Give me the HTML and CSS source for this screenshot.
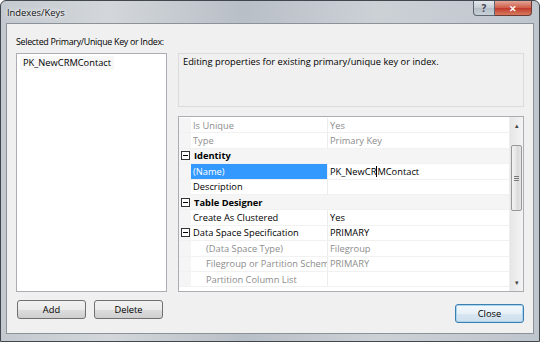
FILE: index.html
```html
<!DOCTYPE html>
<html lang="en">
<head>
    <meta charset="UTF-8">
    <title>Indexes/Keys</title>
    <link rel="stylesheet" href="styles.css">
</head>
<body>
    <div class="window">
        <!-- Title bar -->
        <div class="titlebar">
            <span class="title">Indexes/Keys</span>
            <div class="controls">
                <div class="ctl help">?</div>
                <div class="ctl close-x">&#x2715;</div>
            </div>
        </div>

        <!-- Client area -->
        <div class="client">
            <div class="label">Selected Primary/Unique Key or Index:</div>
            <div class="main">
                <div class="keylist">
                    <div class="item">PK_NewCRMContact</div>
                </div>
                <div class="right">
                    <div class="desc">Editing properties for existing primary/unique key or index.</div>
                    <div class="grid">
                        <div class="rows">
                            <div class="row"><div class="gut"></div><div class="name dim">Is Unique</div><div class="val dim">Yes</div></div>
                            <div class="row"><div class="gut"></div><div class="name dim">Type</div><div class="val dim">Primary Key</div></div>
                            <div class="row cat"><div class="gut"><svg class="exp" width="9" height="9" viewBox="0 0 9 9"><rect x="0.5" y="0.5" width="8" height="8" fill="#fff" stroke="#333"/><path d="M2 4.5h5" stroke="#000"/></svg></div><div class="name">Identity</div><div class="val"></div></div>
                            <div class="row"><div class="gut"></div><div class="name sel">(Name)</div><div class="val">PK_NewCR<span class="caret"></span>MContact</div></div>
                            <div class="row"><div class="gut"></div><div class="name">Description</div><div class="val"></div></div>
                            <div class="row cat"><div class="gut"><svg class="exp" width="9" height="9" viewBox="0 0 9 9"><rect x="0.5" y="0.5" width="8" height="8" fill="#fff" stroke="#333"/><path d="M2 4.5h5" stroke="#000"/></svg></div><div class="name">Table Designer</div><div class="val"></div></div>
                            <div class="row"><div class="gut"></div><div class="name">Create As Clustered</div><div class="val">Yes</div></div>
                            <div class="row"><div class="gut"><svg class="exp" width="9" height="9" viewBox="0 0 9 9"><rect x="0.5" y="0.5" width="8" height="8" fill="#fff" stroke="#333"/><path d="M2 4.5h5" stroke="#000"/></svg></div><div class="name">Data Space Specification</div><div class="val">PRIMARY</div></div>
                            <div class="row"><div class="gut"></div><div class="name dim sub">(Data Space Type)</div><div class="val dim">Filegroup</div></div>
                            <div class="row"><div class="gut"></div><div class="name dim sub">Filegroup or Partition Schem</div><div class="val dim">PRIMARY</div></div>
                            <div class="row"><div class="gut"></div><div class="name dim sub">Partition Column List</div><div class="val"></div></div>
                        </div>
                        <div class="scrollbar">
                            <div class="sb-btn">&#x25B4;</div>
                            <div class="sb-track"><div class="thumb"><span></span><span></span><span></span></div></div>
                            <div class="sb-btn">&#x25BE;</div>
                        </div>
                    </div>
                </div>
            </div>
            <div class="buttons">
                <div class="left-btns">
                    <button class="btn">Add</button>
                    <button class="btn">Delete</button>
                </div>
                <button class="btn default">Close</button>
            </div>
        </div>
    </div>
</body>
</html>
```

FILE: styles.css
```css
body { margin: 0; font-family: "Open Sans", "Liberation Sans", sans-serif; font-size: 9.3px; color: #000; }
.window { width: 540px; height: 342px; box-sizing: border-box; border: 1px solid #41474f; border-radius: 6px 6px 0 0; padding: 0 5px 7px 5px; display: flex; flex-direction: column; background: linear-gradient(to right, #c3c9cf 0%, #d3d7db 20%, #b9bfc6 45%, #ccd1d6 70%, #bfc5cc 100%); }

/* Title bar */
.titlebar { height: 22px; display: flex; justify-content: space-between; align-items: flex-start; }
.title { padding: 5px 0 0 1px; font-size: 9.4px; color: #111; text-shadow: 0 0 6px #fff, 0 0 3px #fff; }
.controls { display: flex; margin-right: 2px; }
.ctl { height: 15px; box-sizing: border-box; display: flex; align-items: center; justify-content: center; border: 1px solid #5d6670; border-top: none; }
.help { width: 22px; border-radius: 0 0 0 4px; background: linear-gradient(#e4e8ec, #c5ccd3 50%, #b5bdc6 51%, #c8d0d8); color: #445; font-size: 10px; font-weight: bold; }
.close-x { width: 37px; border-left: none; border-radius: 0 0 4px 0; background: linear-gradient(#e2a597, #cf5a45 50%, #c0392b 51%, #d77a5e); color: #fff; font-size: 9px; font-weight: bold; border-color: #6d3a33; }

/* Client */
.client { flex: 1; border: 1px solid #8b9299; background: #f0f0f0; padding: 11px 9px 0 9px; }
.label { height: 14px; line-height: 14px; margin-bottom: 4px; font-size: 8.9px; letter-spacing: -0.3px; }
.main { display: flex; gap: 11px; height: 239px; }
.keylist { width: 151px; box-sizing: border-box; border: 1px solid #abadb3; background: #fff; padding: 2px 3px; }
.item { display: inline-block; padding: 0 3px; line-height: 14px; background: #f7f7f7; }
.right { flex: 1; display: flex; flex-direction: column; gap: 9px; }
.desc { height: 54px; box-sizing: border-box; border: 1px solid #dcdcdc; padding: 1px 4px; line-height: 14px; background: #f0f0f0; }

/* Property grid */
.grid { flex: 1; display: flex; border: 1px solid #abadb3; background: #fff; }
.rows { flex: 1; padding-top: 1px; }
.row { display: flex; height: 15.4px; align-items: stretch; box-sizing: border-box; border-bottom: 1px solid #f1f1f1; }
.row > div { display: flex; align-items: center; white-space: nowrap; overflow: hidden; }
.gut { width: 12px; justify-content: center; background: #f5f5f5; }
.name { width: 136px; padding-left: 2px; box-sizing: border-box; }
.val { flex: 1; padding-left: 2px; border-left: 1px solid #ededed; }
.cat { background: #f5f5f5; }
.cat .name { font-weight: bold; padding-left: 3px; overflow: visible; }
.cat .val { border-left-color: transparent; }
.dim { color: #8d8d8d; }
.sub { padding-left: 15px; }
.sel { background: #3399ff; color: #fff; }
.caret { display: inline-block; width: 1px; height: 11px; background: #000; }
.exp { display: block; }

.scrollbar { width: 13px; display: flex; flex-direction: column; background: linear-gradient(to right, #e6e6e6, #f4f4f4); border-left: 1px solid #eee; }
.sb-btn { height: 17px; display: flex; align-items: center; justify-content: center; font-size: 7px; color: #444; }
.sb-track { flex: 1; padding-top: 11px; }
.thumb { height: 66px; margin: 0 1px; box-sizing: border-box; border: 1px solid #979797; border-radius: 2px; background: linear-gradient(to right, #f3f3f3, #e2e2e2 50%, #d6d6d6 51%, #e6e6e6); display: flex; flex-direction: column; align-items: center; justify-content: center; gap: 1px; }
.thumb span { width: 5px; height: 1px; background: #7a7a7a; }

/* Buttons */
.buttons { display: flex; justify-content: space-between; align-items: flex-start; }
.left-btns { display: flex; gap: 8px; margin-top: 8px; padding-left: 1px; }
.btn { width: 69px; height: 19px; padding: 0; font-family: inherit; font-size: 9.3px; color: #000; border: 1px solid #707070; border-radius: 3px; background: linear-gradient(#f2f2f2, #ebebeb 50%, #dddddd 51%, #cfcfcf); }
.default { margin-top: 12px; border-color: #3c7fb1; background: linear-gradient(#f4f9fc, #e6f0f7 50%, #d7e6f1 51%, #cfdfec); box-shadow: inset 0 0 0 1px #a8d4f0; }
```
